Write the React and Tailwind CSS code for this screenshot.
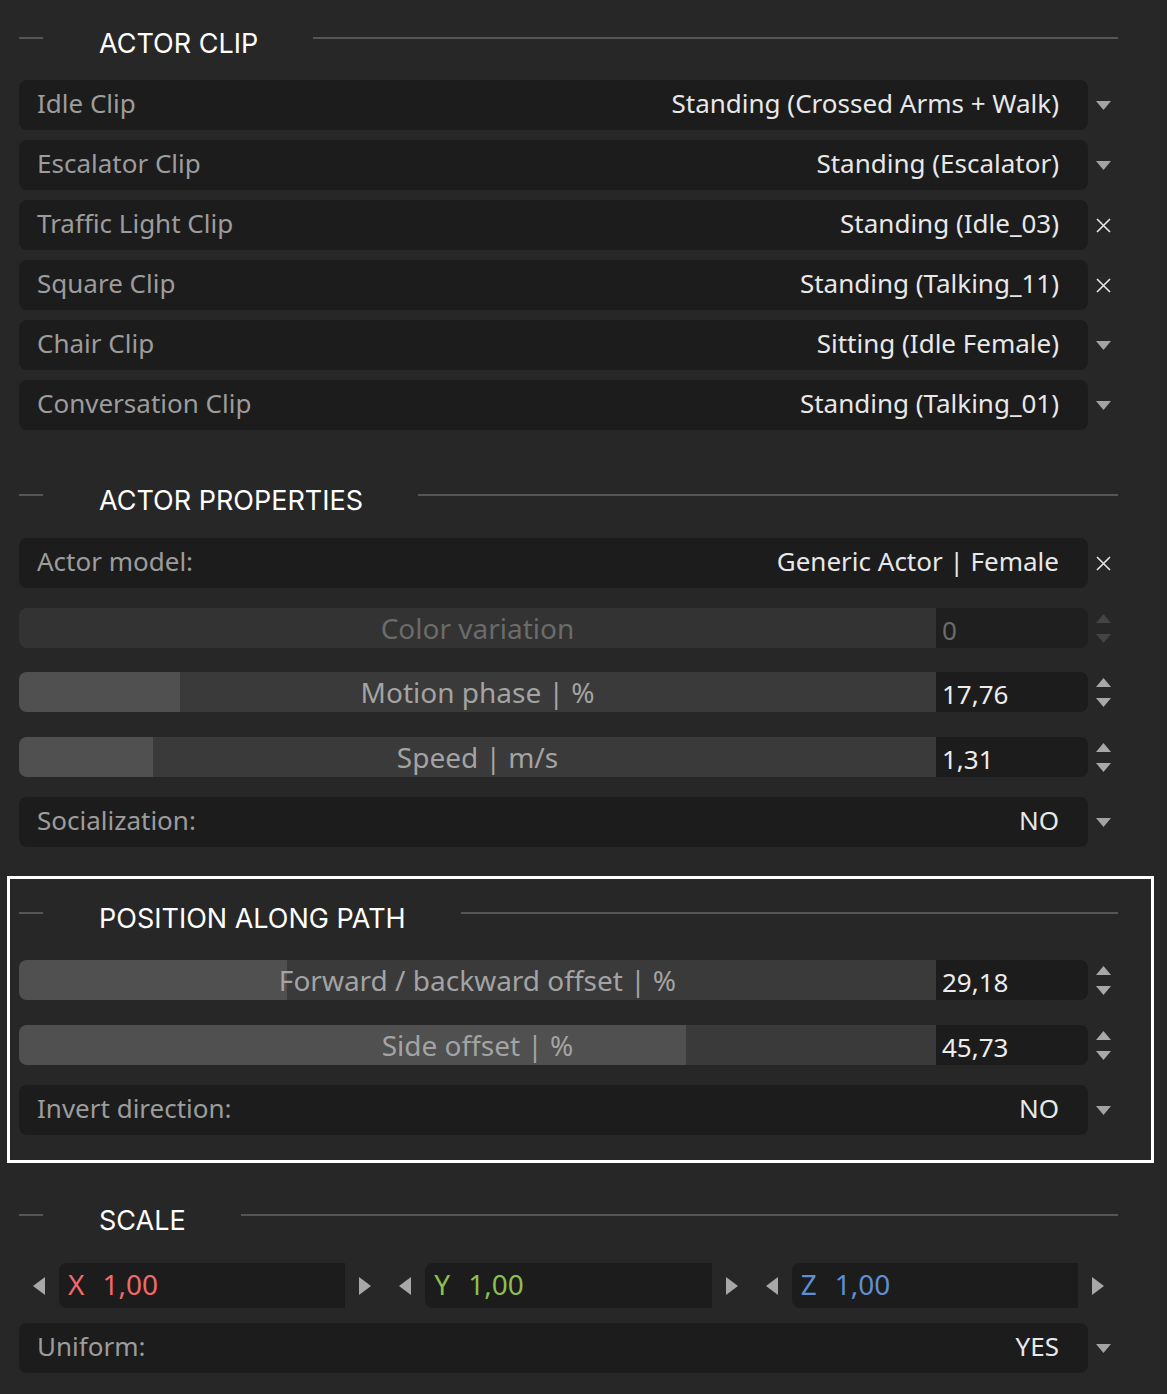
import React from "react";

const Down = ({ c = "#a3a3a3" }) => (
  <svg width="15" height="9" viewBox="0 0 15 9"><path d="M0 0H15L7.5 9Z" fill={c} /></svg>
);
const Up = ({ c = "#a3a3a3" }) => (
  <svg width="15" height="9" viewBox="0 0 15 9"><path d="M0 9H15L7.5 0Z" fill={c} /></svg>
);
const Cross = () => (
  <svg width="15" height="15" viewBox="0 0 15 15"><path d="M1 1L14 14M14 1L1 14" stroke="#e6e6e6" strokeWidth="1.6" /></svg>
);
const Left = () => (
  <svg width="12" height="18" viewBox="0 0 12 18"><path d="M12 0V18L0 9Z" fill="#a8a8a8" /></svg>
);
const Right = () => (
  <svg width="12" height="18" viewBox="0 0 12 18"><path d="M0 0V18L12 9Z" fill="#a8a8a8" /></svg>
);

function Header({ title }) {
  return (
    <div className="flex h-[40px] items-center">
      <div className="mb-[10px] h-[2px] w-[24px] bg-[#555555]" />
      <div className="ml-[56px] font-['Inter',sans-serif] text-[27px] leading-none text-white">{title}</div>
      <div className="mb-[10px] ml-[55px] h-[2px] flex-1 bg-[#555555]" />
    </div>
  );
}

function Row({ label, value, icon = "down", cls = "" }) {
  return (
    <div className={"flex h-[50px] " + cls}>
      <div className="flex w-[1069px] items-center justify-between rounded-[8px] bg-[#1c1c1c] pb-[3px] pl-[18px] pr-[29px] text-[26px]">
        <span className="text-[#9c9c9c]">{label}</span>
        <span className="text-[#e8e8e8]">{value}</span>
      </div>
      <div className="flex flex-1 items-center justify-center">
        {icon === "down" ? <Down /> : <Cross />}
      </div>
    </div>
  );
}

function Slider({ label, value, fill, disabled, cls = "" }) {
  return (
    <div className={"flex h-[40px] " + cls}>
      <div className={"relative w-[917px] overflow-hidden rounded-l-[8px] " + (disabled ? "bg-[#333333]" : "bg-[#3a3a3a]")}>
        {fill ? <div className="absolute inset-y-0 left-0 bg-[#505050]" style={{ width: fill }} /> : null}
        <div className={"relative flex h-full items-center justify-center text-[28px] " + (disabled ? "text-[#6b6b6b]" : "text-[#a3a3a3]")}>
          {label}
        </div>
      </div>
      <div className={"flex w-[152px] items-center rounded-r-[8px] pl-[6px] pt-[4px] text-[26px] " + (disabled ? "bg-[#1f1f1f] text-[#6b6b6b]" : "bg-[#1c1c1c] text-[#ececec]")}>
        {value}
      </div>
      <div className="flex flex-1 flex-col items-center justify-center gap-[11px]">
        <Up c={disabled ? "#444444" : "#a8a8a8"} />
        <Down c={disabled ? "#444444" : "#a8a8a8"} />
      </div>
    </div>
  );
}

function Axis({ letter, color }) {
  return (
    <div className="grid h-[40px] grid-cols-[40px_1fr_40px]">
      <div className="flex items-center justify-center"><Left /></div>
      <div className={"flex items-center rounded-l-[8px] bg-[#1c1c1c] pb-[3px] pl-[9px] text-[28px] " + color}>
        <span>{letter}</span>
        <span className="ml-[18px]">1,00</span>
      </div>
      <div className="flex items-center justify-center"><Right /></div>
    </div>
  );
}

export default function App() {
  return (
    <div className="h-[1394px] w-[1167px] overflow-hidden bg-[#272727] font-['Noto_Sans','Open_Sans',sans-serif]">
      <div className="pl-[19px] pr-[49px] pt-[23px]">
        <Header title="ACTOR CLIP" />
        <div className="mt-[17px] flex flex-col gap-[10px]">
          <Row label="Idle Clip" value="Standing (Crossed Arms + Walk)" />
          <Row label="Escalator Clip" value="Standing (Escalator)" />
          <Row label="Traffic Light Clip" value="Standing (Idle_03)" icon="x" />
          <Row label="Square Clip" value="Standing (Talking_11)" icon="x" />
          <Row label="Chair Clip" value="Sitting (Idle Female)" />
          <Row label="Conversation Clip" value="Standing (Talking_01)" />
        </div>
        <div className="mt-[50px]">
          <Header title="ACTOR PROPERTIES" />
        </div>
        <Row cls="mt-[18px]" label="Actor model:" value="Generic Actor | Female" icon="x" />
        <Slider cls="mt-[20px]" label="Color variation" value="0" disabled />
        <Slider cls="mt-[24px]" label="Motion phase | %" value="17,76" fill="161px" />
        <Slider cls="mt-[25px]" label="Speed | m/s" value="1,31" fill="134px" />
        <Row cls="mt-[20px]" label="Socialization:" value="NO" />
      </div>
      <div className="ml-[7px] mr-[13px] mt-[29px] border-[3px] border-white pb-[25px] pl-[9px] pr-[33px] pt-[19px]">
        <Header title="POSITION ALONG PATH" />
        <Slider cls="mt-[22px]" label="Forward / backward offset | %" value="29,18" fill="268px" />
        <Slider cls="mt-[25px]" label="Side offset | %" value="45,73" fill="667px" />
        <Row cls="mt-[20px]" label="Invert direction:" value="NO" />
      </div>
      <div className="pl-[19px] pr-[49px] pt-[37px]">
        <Header title="SCALE" />
        <div className="mt-[23px] grid grid-cols-3">
          <Axis letter="X" color="text-[#f06a6a]" />
          <Axis letter="Y" color="text-[#8cbf4e]" />
          <Axis letter="Z" color="text-[#5f8fd3]" />
        </div>
        <Row cls="mt-[20px]" label="Uniform:" value="YES" />
      </div>
    </div>
  );
}
